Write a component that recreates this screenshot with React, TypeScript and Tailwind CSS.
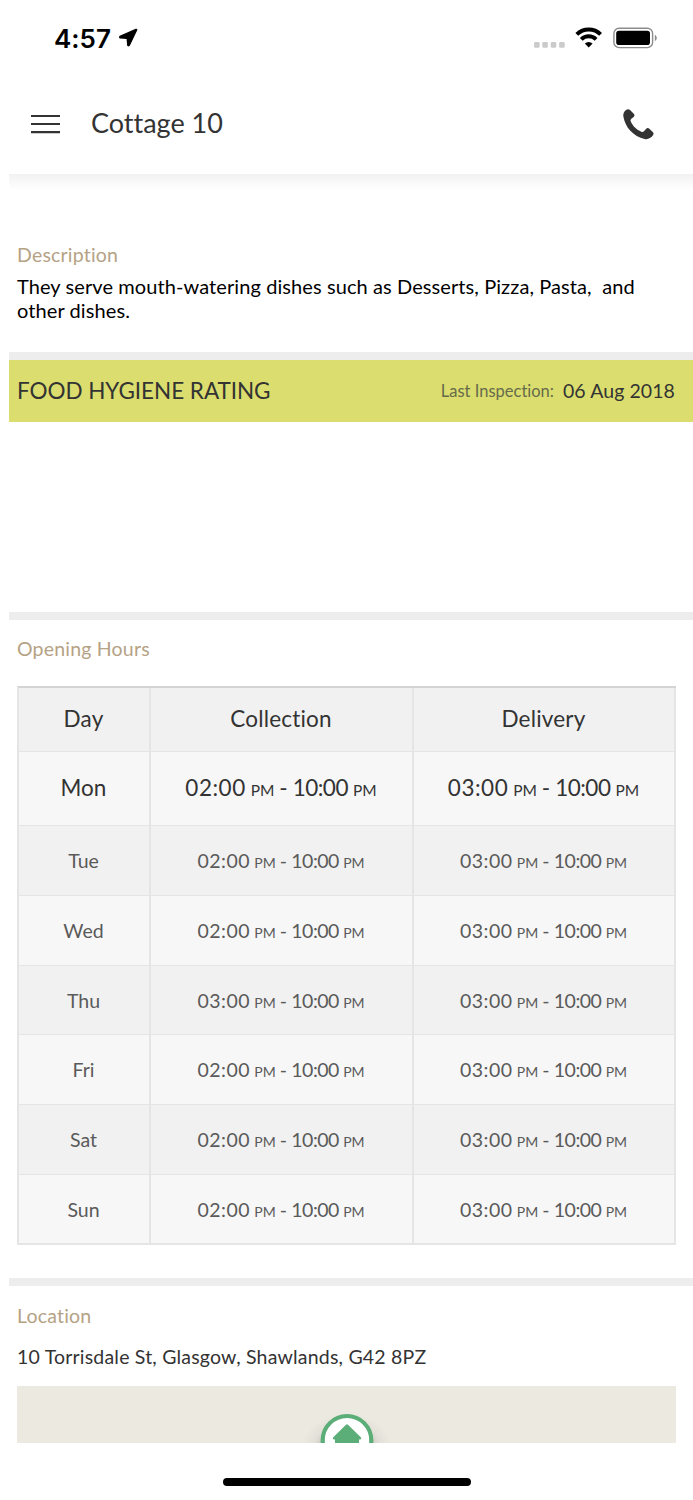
const HOURS = [
  { day: 'Mon', collection: '02:00', delivery: '03:00', today: true },
  { day: 'Tue', collection: '02:00', delivery: '03:00' },
  { day: 'Wed', collection: '02:00', delivery: '03:00' },
  { day: 'Thu', collection: '03:00', delivery: '03:00' },
  { day: 'Fri', collection: '02:00', delivery: '03:00' },
  { day: 'Sat', collection: '02:00', delivery: '03:00' },
  { day: 'Sun', collection: '02:00', delivery: '03:00' },
];

function StatusBar() {
  return (
    <div className="flex h-[76px] shrink-0 items-center pl-[54px] pr-9">
      <span className="w-[60px] whitespace-nowrap pt-px font-['Inter'] text-[26px] font-semibold leading-none text-black">4:57</span>
      <svg width="20" height="20" viewBox="0 0 20 20" className="ml-1">
        <path d="M18 1.4 2 8.4Q1.4 9 2 9.7L9.2 10.4 9.8 17.3Q10.5 18 11.3 17.3L18.6 2Q18.8 1.2 18 1.4Z" fill="#000" stroke="#000" strokeWidth="1.4" strokeLinejoin="round" />
      </svg>
      <svg width="124" height="24" viewBox="0 0 124 24" className="ml-auto">
        <g fill="#cbcbcb">
          <rect x="1" y="16" width="5.6" height="5.8" rx="1.4" />
          <rect x="9.3" y="16" width="5.6" height="5.8" rx="1.4" />
          <rect x="17.7" y="16" width="5.6" height="5.8" rx="1.4" />
          <rect x="26.1" y="16" width="5.6" height="5.8" rx="1.4" />
        </g>
        <g fill="none" stroke="#000" strokeWidth="4">
          <path d="M43.8 8.4a17 17 0 0 1 23.8 0" />
          <path d="M48.3 13.4a10.5 10.5 0 0 1 14.8 0" />
        </g>
        <path d="M51.8 17.6a5.6 5.6 0 0 1 7.8 0l-3.9 3.9Z" fill="#000" />
        <rect x="80.9" y="2.3" width="38.7" height="19.3" rx="5.2" fill="none" stroke="#8c8c8c" strokeWidth="1.4" />
        <rect x="83.2" y="4.8" width="33.8" height="14.2" rx="2.8" fill="#000" />
        <path d="M121.8 8.8c2.6 1.4 2.6 5 0 6.4Z" fill="#8c8c8c" />
      </svg>
    </div>
  );
}

function PhoneIcon() {
  return (
    <svg width="44" height="42" viewBox="0 0 132 126" className="ml-auto mt-[4px]">
      <path
        d="M30 21Q37 16 42 21L54 33Q58 37 53 42L46 47Q42 50 44 55C50 69 62 81 76 86Q80 88 84 85L90 78Q95 73 100 77L111 88Q115 92 111 97C104 106 96 110 86 108C52 101 27 73 22 40C21 32 24 26 30 21Z"
        fill="#333"
      />
    </svg>
  );
}

function Range({ from, today }: { from: string; today?: boolean }) {
  const pm = today ? 'text-[15.5px]' : 'text-[14px]';
  return (
    <span className="whitespace-pre [word-spacing:-0.8px]">
      <span className="tracking-[0.5px]">{from}</span> <span className={pm}>PM</span> - <span className="tracking-[-0.5px]">10:00</span> <span className={pm}>PM</span>
    </span>
  );
}

function HoursTable() {
  return (
    <div className="ml-2 mt-[25px] grid w-[659px] grid-cols-[132px_263px_262px] grid-rows-[64px_74px_70px_70px_69px_70px_70px_69px] border-b border-l-2 border-t-2 border-[#e5e5e5] border-t-[#d4d4d4] text-center">
      {['Day', 'Collection', 'Delivery'].map((label) => (
        <div key={label} className="flex items-center justify-center border-b border-r-2 border-[#e5e5e5] bg-[#f1f1f1] pb-px pr-px text-[22.5px] tracking-[0.2px] text-[#333]">
          {label}
        </div>
      ))}
      {HOURS.map((row, i) => {
        const cell = `flex items-center justify-center border-b border-r-2 border-[#e5e5e5] pr-px ${i % 2 ? 'bg-[#f1f1f1]' : 'bg-[#f7f7f7]'} ${
          row.today ? 'pb-px text-[22.5px] text-[#333]' : 'pt-px text-[19.5px] text-[#5a5a5a]'
        }`;
        return (
          <div key={row.day} className="contents">
            <div className={cell}>{row.day}</div>
            <div className={cell}><Range from={row.collection} today={row.today} /></div>
            <div className={cell}><Range from={row.delivery} today={row.today} /></div>
          </div>
        );
      })}
    </div>
  );
}

function SectionTitle({ children }: { children: string }) {
  return <h2 className="pl-2 text-[19.5px] leading-6 tracking-[0.2px] text-[#b5a285]">{children}</h2>;
}

export default function App() {
  return (
    <main className="flex h-[1500px] w-[693px] flex-col overflow-hidden bg-white font-['Lato',sans-serif] [font-variant-ligatures:none]">
      <StatusBar />
      <header className="flex h-[98px] shrink-0 items-center pb-1.5 pl-[31px] pr-[33px]">
        <svg width="30" height="20" viewBox="0 0 30 20" className="mt-[3px]">
          <path d="M0 2h29M0 10h29M0 18.2h29" stroke="#333" strokeWidth="2.2" />
        </svg>
        <h1 className="ml-[30px] text-[27px] leading-none text-[#333]">Cottage 10</h1>
        <PhoneIcon />
      </header>

      <div className="flex flex-col pl-[9px]">
        <div className="h-[16px] bg-linear-to-b from-[#f2f2f2] to-white" />

        <section className="h-[162px] pt-[53px]">
          <SectionTitle>Description</SectionTitle>
          <p className="whitespace-pre-line pl-2 pt-[7px] text-[20px] leading-6 tracking-[0.09px] text-black">
            They serve mouth-watering dishes such as Desserts, Pizza, Pasta,&nbsp; and{'\n'}other dishes.
          </p>
        </section>

        <div className="flex h-[70px] items-center border-t-8 border-[#ededed] bg-[#dbde6e] pl-2 pr-[18px] text-[#333]">
          <span className="pb-px text-[22.5px] tracking-[-0.05px]">FOOD HYGIENE RATING</span>
          <span className="ml-auto text-[16.5px] text-[#666b4b]">Last Inspection:</span>
          <span className="ml-[9px] text-[19.5px] tracking-[0.08px]">06 Aug 2018</span>
        </div>

        <section className="mt-[190px] border-t-8 border-[#ededed] pt-[17px]">
          <SectionTitle>Opening Hours</SectionTitle>
          <HoursTable />
        </section>

        <section className="mt-[33px] border-t-8 border-[#ededed] pt-[18px]">
          <SectionTitle>Location</SectionTitle>
          <p className="pl-2 pt-[17px] text-[19.5px] leading-6 tracking-[0.2px] text-[#333]">10 Torrisdale St, Glasgow, Shawlands, G42 8PZ</p>
          <div className="ml-2 mt-[17px] flex h-[57px] w-[659px] justify-center overflow-hidden bg-[#ece9e1]">
            <svg width="90" height="90" viewBox="0 0 90 90" className="mt-[9px] shrink-0">
              <defs>
                <radialGradient id="pinShade">
                  <stop offset="0.55" stopColor="#000" stopOpacity="0.14" />
                  <stop offset="0.75" stopColor="#000" stopOpacity="0.04" />
                  <stop offset="1" stopColor="#000" stopOpacity="0" />
                </radialGradient>
              </defs>
              <path d="M0 18h90v72H0Z" fill="url(#pinShade)" />
              <circle cx="45" cy="45.3" r="24.3" fill="#fff" stroke="#5cae78" strokeWidth="4.2" />
              <path d="M44 29.8q1-.9 2 0L59 42.5q.5 1.5-.8 2H57V58H33V44.5h-1.2q-1.3-.5-.8-2Z" fill="#5cae78" />
            </svg>
          </div>
        </section>
      </div>

      <div className="mx-auto mt-auto mb-[14px] h-2 w-[248px] shrink-0 rounded-full bg-black" />
    </main>
  );
}
